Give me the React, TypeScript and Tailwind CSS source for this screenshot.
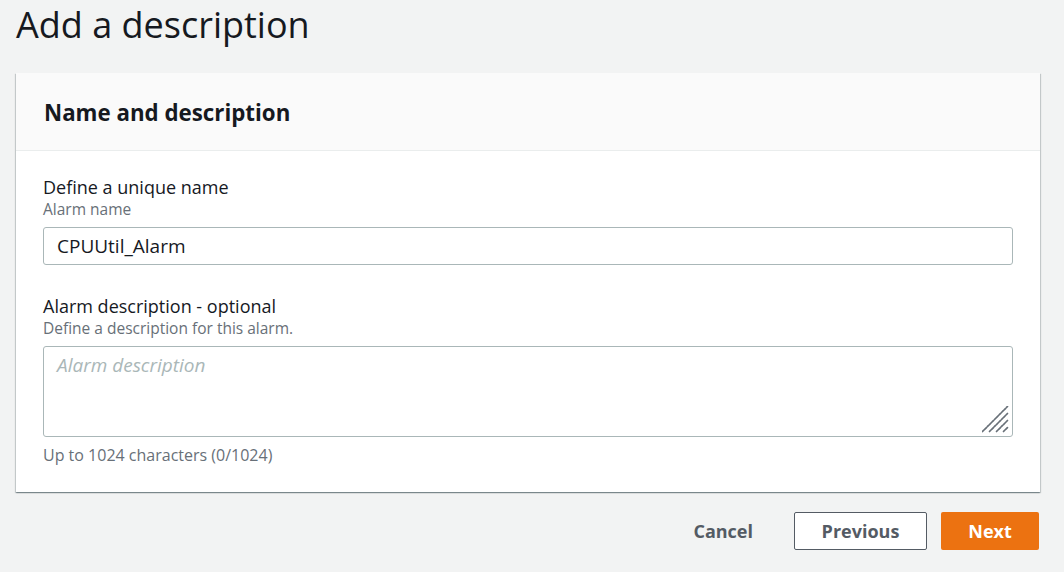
import { useState } from "react";

const font = { fontFamily: '"Open Sans", "Noto Sans", Arial, sans-serif' };

function ResizeGrip() {
  return (
    <svg
      className="pointer-events-none absolute bottom-[3px] right-[3px]"
      width="28"
      height="28"
      viewBox="0 0 28 28"
    >
      <g stroke="#687078" strokeWidth="1.7" strokeLinecap="round" strokeDasharray="2.2 1.2">
        <line x1="0.5" y1="25.5" x2="25.5" y2="0.5" />
        <line x1="7.5" y1="25.5" x2="25.5" y2="7.5" />
        <line x1="14.5" y1="25.5" x2="25.5" y2="14.5" />
        <line x1="21.5" y1="25.5" x2="25.5" y2="21.5" />
      </g>
    </svg>
  );
}

export default function App() {
  const [name, setName] = useState("CPUUtil_Alarm");
  const [description, setDescription] = useState("");

  return (
    <div className="min-h-[572px] w-full bg-[#f2f3f3] text-[#16191f]" style={font}>
      <div className="px-4 pt-[1px]">
        <h1 className="text-[36px] font-normal leading-[48px] text-[#16191f]">
          Add a description
        </h1>

        <div className="mt-[24px] w-[1024px] bg-white shadow-[0_1px_1px_0_rgba(0,28,36,0.3),1px_1px_1px_0_rgba(0,28,36,0.15),-1px_1px_1px_0_rgba(0,28,36,0.15)]">
          <div className="flex h-[78px] items-center border-b border-[#eaeded] bg-[#fafafa] px-7 pt-[3px]">
            <h2 className="text-[22.3px] font-bold leading-7 text-[#16191f]">
              Name and description
            </h2>
          </div>

          <div className="px-[27px] pb-[27px] pt-6">
            <label className="block">
              <div className="text-[18px] leading-6 text-[#16191f]">Define a unique name</div>
              <div className="text-[15.5px] leading-5 text-[#687078]">Alarm name</div>
              <input
                value={name}
                onChange={(e) => setName(e.target.value)}
                className="mt-2 h-[38px] w-full rounded-[3px] border border-[#aab7b8] bg-white px-[13px] text-[19px] text-[#16191f] outline-none"
                style={font}
              />
            </label>

            <label className="mt-[29px] block">
              <div className="text-[18px] leading-6 text-[#16191f]">
                Alarm description - optional
              </div>
              <div className="text-[15.5px] leading-5 text-[#687078]">
                Define a description for this alarm.
              </div>
              <div className="relative mt-2">
                <textarea
                  value={description}
                  onChange={(e) => setDescription(e.target.value)}
                  placeholder="Alarm description"
                  className="block h-[91px] w-full resize-none rounded-[3px] border border-[#aab7b8] bg-white px-[13px] py-[6px] text-[19px] leading-6 text-[#16191f] outline-none placeholder:italic placeholder:text-[#aab7b8]"
                  style={font}
                />
                <ResizeGrip />
              </div>
              <div className="mt-2 text-[16px] leading-5 text-[#687078]">
                Up to 1024 characters ({description.length}/1024)
              </div>
            </label>
          </div>
        </div>

        <div className="mt-5 flex w-[1023px] items-center justify-end gap-[14px]">
          <button className="mr-[7px] h-[38px] px-5 text-[18px] font-bold text-[#545b64]">
            Cancel
          </button>
          <button className="h-[38px] w-[133px] rounded-[2px] border border-[#545b64] bg-white text-[18px] font-bold text-[#545b64]">
            Previous
          </button>
          <button className="h-[38px] w-[98px] rounded-[2px] bg-[#ec7211] text-[18px] font-bold text-white">
            Next
          </button>
        </div>
      </div>
    </div>
  );
}
